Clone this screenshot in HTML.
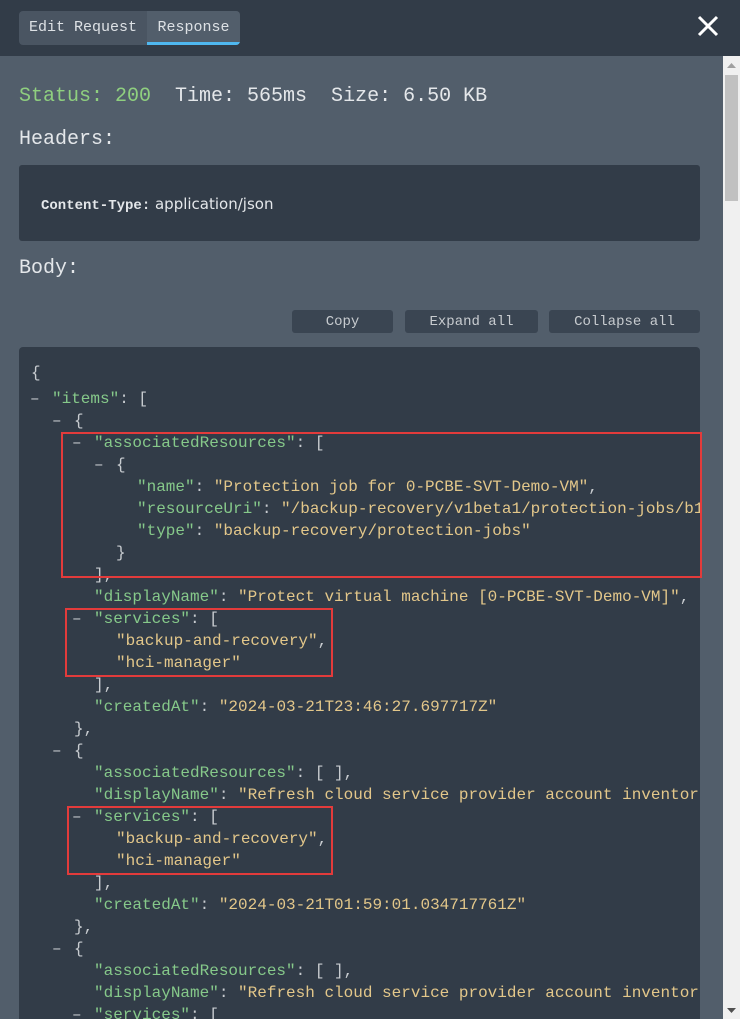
<!DOCTYPE html>
<html><head><meta charset="utf-8"><style>
*{margin:0;padding:0;box-sizing:border-box}
html,body{width:740px;height:1019px;overflow:hidden}
body{background:#525e6b;font-family:"Liberation Mono",monospace;position:relative}
.hdr{position:absolute;left:0;top:0;width:740px;height:56px;background:#323c48}
.tabs{position:absolute;left:19px;top:11px;width:221px;height:34px;background:#4a5562;border-radius:4px;overflow:hidden;font-size:15px;color:#dde1e5}
.tab{position:absolute;top:0;height:34px;line-height:33px;text-align:center}
.sb{position:absolute;left:723px;top:56px;width:17px;height:963px;background:#f0f0f0}
.thumb{position:absolute;left:725px;top:75px;width:13px;height:126px;background:#c1c1c1}
.t{position:absolute;white-space:pre;color:#e4e7ea}
.btn{position:absolute;top:310px;height:23px;background:#3a4552;border-radius:3px;color:#c8ccd0;font-size:14px;line-height:24px;text-align:center}
.code{position:absolute;left:19px;top:347px;width:681px;height:672px;background:#323c48;border-radius:4px 4px 0 0}
.l{position:absolute;white-space:pre;font-size:16px;line-height:22px;height:22px;color:#c8ccd0}
.k{color:#86c98a}.s{color:#e3c78a}
.d{position:absolute;white-space:pre;font-size:16px;line-height:22px;color:#c8ccd0}
.r{position:absolute;border:2px solid #e33b3b}
</style></head><body>
<div class="hdr"></div>
<div class="tabs"><div class="tab" style="left:0;width:128px">Edit Request</div><div class="tab" style="left:128px;width:93px;background:#525e6b;border-bottom:3px solid #4fb8f0">Response</div></div>
<svg style="position:absolute;left:697px;top:15px" width="22" height="22"><path d="M2 2L20 20M20 2L2 20" stroke="#fff" stroke-width="3"/></svg>
<div class="sb"></div><div class="thumb"></div>
<svg style="position:absolute;left:727px;top:63px" width="9" height="6"><path d="M0 5L4.5 0L9 5Z" fill="#a0a0a0"/></svg>
<svg style="position:absolute;left:727px;top:1008px" width="9" height="6"><path d="M0 0L4.5 5L9 0Z" fill="#505050"/></svg>
<div class="t" style="left:19px;top:85px;font-size:20px"><span style="color:#8fcf7f">Status: 200</span>  Time: 565ms  Size: 6.50 KB</div>
<div class="t" style="left:19px;top:128px;font-size:20px">Headers:</div>
<div style="position:absolute;left:19px;top:165px;width:681px;height:76px;background:#323c48;border-radius:3px"></div>
<div class="t" style="left:41px;top:195px;font-size:14px;font-weight:bold">Content-Type:<span style="font-weight:normal;font-family:'DejaVu Sans',sans-serif;font-size:15px"> application/json</span></div>
<div class="t" style="left:19px;top:257px;font-size:20px">Body:</div>
<div class="btn" style="left:292px;width:101px">Copy</div>
<div class="btn" style="left:405px;width:133px">Expand all</div>
<div class="btn" style="left:549px;width:151px">Collapse all</div>
<div class="code"></div>
<div style="position:absolute;left:19px;top:347px;width:681px;height:672px;overflow:hidden">
<div style="position:absolute;left:-19px;top:-345px;width:700px;height:1017px">
<div class="l" style="left:31px;top:360px">{</div>
<div class="d" style="left:30px;top:386px">–</div><div class="l" style="left:52px;top:386px"><span class="k">"items"</span>: [</div>
<div class="d" style="left:52px;top:408px">–</div><div class="l" style="left:74px;top:408px">{</div>
<div class="d" style="left:72px;top:430px">–</div><div class="l" style="left:94px;top:430px"><span class="k">"associatedResources"</span>: [</div>
<div class="d" style="left:94px;top:452px">–</div><div class="l" style="left:116px;top:452px">{</div>
<div class="l" style="left:137px;top:474px"><span class="k">"name"</span>: <span class="s">"Protection job for 0-PCBE-SVT-Demo-VM"</span>,</div>
<div class="l" style="left:137px;top:496px"><span class="k">"resourceUri"</span>: <span class="s">"/backup-recovery/v1beta1/protection-jobs/b1"</span></div>
<div class="l" style="left:137px;top:518px"><span class="k">"type"</span>: <span class="s">"backup-recovery/protection-jobs"</span></div>
<div class="l" style="left:116px;top:540px">}</div>
<div class="l" style="left:94px;top:562px">],</div>
<div class="l" style="left:94px;top:584px"><span class="k">"displayName"</span>: <span class="s">"Protect virtual machine [0-PCBE-SVT-Demo-VM]"</span>,</div>
<div class="d" style="left:72px;top:606px">–</div><div class="l" style="left:94px;top:606px"><span class="k">"services"</span>: [</div>
<div class="l" style="left:116px;top:628px"><span class="s">"backup-and-recovery"</span>,</div>
<div class="l" style="left:116px;top:650px"><span class="s">"hci-manager"</span></div>
<div class="l" style="left:94px;top:672px">],</div>
<div class="l" style="left:94px;top:694px"><span class="k">"createdAt"</span>: <span class="s">"2024-03-21T23:46:27.697717Z"</span></div>
<div class="l" style="left:74px;top:716px">},</div>
<div class="d" style="left:52px;top:738px">–</div><div class="l" style="left:74px;top:738px">{</div>
<div class="l" style="left:94px;top:760px"><span class="k">"associatedResources"</span>: [ ],</div>
<div class="l" style="left:94px;top:782px"><span class="k">"displayName"</span>: <span class="s">"Refresh cloud service provider account inventor</span></div>
<div class="d" style="left:72px;top:804px">–</div><div class="l" style="left:94px;top:804px"><span class="k">"services"</span>: [</div>
<div class="l" style="left:116px;top:826px"><span class="s">"backup-and-recovery"</span>,</div>
<div class="l" style="left:116px;top:848px"><span class="s">"hci-manager"</span></div>
<div class="l" style="left:94px;top:870px">],</div>
<div class="l" style="left:94px;top:892px"><span class="k">"createdAt"</span>: <span class="s">"2024-03-21T01:59:01.034717761Z"</span></div>
<div class="l" style="left:74px;top:914px">},</div>
<div class="d" style="left:52px;top:936px">–</div><div class="l" style="left:74px;top:936px">{</div>
<div class="l" style="left:94px;top:958px"><span class="k">"associatedResources"</span>: [ ],</div>
<div class="l" style="left:94px;top:980px"><span class="k">"displayName"</span>: <span class="s">"Refresh cloud service provider account inventor</span></div>
<div class="d" style="left:72px;top:1002px">–</div><div class="l" style="left:94px;top:1002px"><span class="k">"services"</span>: [</div>
</div></div>
<div class="r" style="left:61px;top:432px;width:641px;height:146px"></div>
<div class="r" style="left:65px;top:608px;width:268px;height:69px"></div>
<div class="r" style="left:67px;top:806px;width:266px;height:69px"></div>
</body></html>
